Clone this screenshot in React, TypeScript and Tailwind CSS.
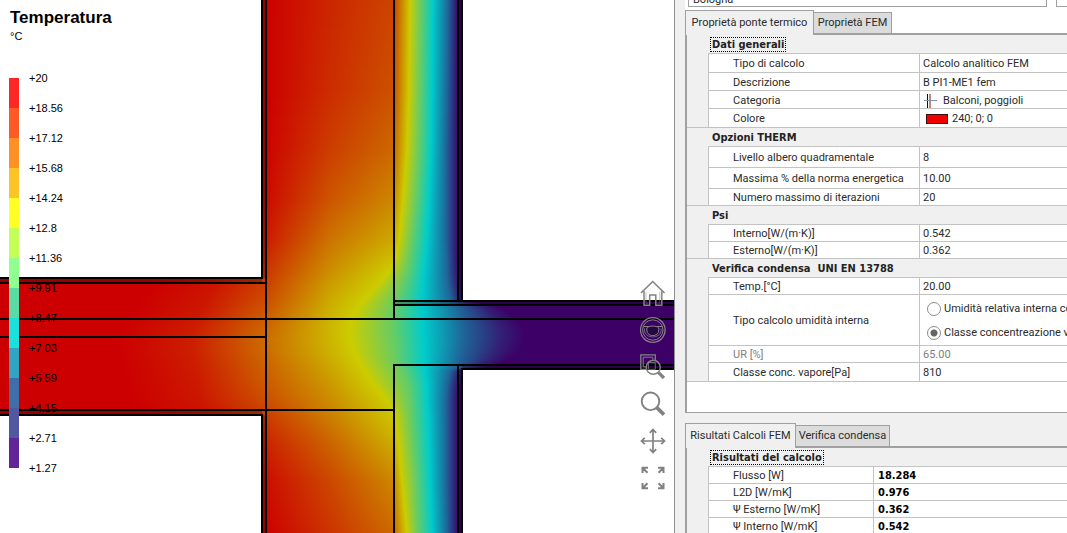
import React from "react";

type Row = { label: string; value: React.ReactNode; height: string; muted?: boolean };
type Group = { title: string; height: string; focused?: boolean; rows: Row[] };

// Each slice: y, then [x, level] nodes. Levels: 0 red, 3 yellow, 5 cyan, 7 violet.
type Slice = { y: number; nodes: [number, number][] };

const slice = (
  y: number,
  start: number,
  left: number,
  middle: number,
  edge: [number, number],
  iso: number[]
): Slice => {
  const tail = iso[4] - iso[3];
  return {
    y,
    nodes: [
      [start - 25, 0],
      [start + (266 - start) * 0.4, left * 0.28],
      [266, left],
      [330, middle],
      edge,
      [iso[0], 3],
      [iso[1], 4],
      [iso[2], 5],
      [iso[3], 6],
      [iso[4] - tail * 0.2, 6.7],
      [iso[4] + tail * 0.3, 7],
    ],
  };
};

const slices: Slice[] = [
  slice(0, 200, 0, 0.55, [394, 1], [410, 421, 433, 448, 457]),
  slice(90, 200, 0, 0.65, [394, 1.2], [409, 420, 432, 447, 457]),
  slice(150, 200, 0.05, 0.9, [394, 1.55], [407, 419, 431, 446, 457]),
  slice(200, 200, 0.15, 1.25, [394, 2], [403, 416, 429, 446, 457]),
  slice(240, 200, 0.4, 1.7, [394, 2.5], [399, 412, 427, 446, 457]),
  slice(260, 190, 0.65, 1.95, [394, 2.85], [395, 409, 425, 447, 457]),
  slice(272, 182, 0.8, 2.1, [389, 3], [389, 407, 424, 447, 458]),
  slice(285, 175, 0.95, 2.3, [378, 3], [378, 403, 423, 448, 459]),
  slice(301, 165, 1.15, 2.5, [363, 3], [363, 397, 422, 451, 462]),
  slice(305, 163, 1.2, 2.55, [360, 3], [360, 396, 422, 456, 486]),
  slice(311, 158, 1.3, 2.6, [356, 3], [356, 394, 422, 459, 496]),
  slice(320, 152, 1.4, 2.65, [352, 3], [352, 393, 423, 461, 505]),
  slice(330, 146, 1.52, 2.68, [350, 3], [350, 393, 423, 463, 511]),
  slice(340, 143, 1.6, 2.66, [351, 3], [351, 395, 424, 463, 511]),
  slice(352, 143, 1.58, 2.6, [354, 3], [354, 396, 424, 461, 506]),
  slice(360, 145, 1.5, 2.52, [358, 3], [358, 397, 424, 459, 497]),
  slice(367, 148, 1.45, 2.42, [362, 3], [362, 400, 425, 455, 482]),
  slice(371, 150, 1.42, 2.38, [365, 3], [365, 403, 425, 450, 461]),
  slice(385, 152, 1.3, 2.22, [374, 3], [374, 408, 427, 447, 458]),
  slice(400, 155, 1.15, 2.05, [387, 3], [387, 410, 427, 446, 457]),
  slice(415, 165, 0.9, 1.88, [394, 2.93], [395, 411, 428, 446, 457]),
  slice(440, 200, 0.55, 1.5, [394, 2.6], [398, 413, 429, 446, 457]),
  slice(480, 200, 0.2, 1.05, [394, 2], [402, 416, 430, 446, 457]),
  slice(534, 200, 0.02, 0.75, [394, 1.55], [407, 418, 432, 447, 457]),
];

const levelColor = (t: number) => {
  const mix = (a: number[], b: number[], k: number) =>
    `rgb(${a.map((v, i) => Math.round(v + (b[i] - v) * k)).join(",")})`;
  if (t <= 3) return mix([204, 0, 0], [204, 204, 0], t / 3);
  if (t <= 5) return mix([204, 204, 0], [0, 204, 204], (t - 3) / 2);
  return mix([0, 204, 204], [60, 0, 102], (t - 5) / 2);
};

const nodesAt = (y: number): [number, number][] => {
  const i = Math.max(1, slices.findIndex((s) => s.y >= y));
  const a = slices[i - 1];
  const b = slices[i];
  const k = (y - a.y) / (b.y - a.y);
  return a.nodes.map(([x, t], n) => [
    x + (b.nodes[n][0] - x) * k,
    t + (b.nodes[n][1] - t) * k,
  ]);
};

const strips = Array.from({ length: 533 }, (_, y) => ({ y, nodes: nodesAt(y + 0.5) }));

const ThermalField = () => (
  <svg
    viewBox="0 0 674 533"
    preserveAspectRatio="xMaxYMin slice"
    className="block h-full w-full"
    role="img"
    aria-label="Temperatura"
  >
    <defs>
      <clipPath id="section">
        <path d="M0 278H262V0H462V301H674V369H462V533H262V415H0Z" />
      </clipPath>
      {strips.map((s) => (
        <linearGradient
          key={s.y}
          id={`strip-${s.y}`}
          gradientUnits="userSpaceOnUse"
          x1="0"
          y1="0"
          x2="674"
          y2="0"
        >
          {s.nodes.map(([x, t], n) => (
            <stop key={n} offset={x / 674} stopColor={levelColor(t)} />
          ))}
        </linearGradient>
      ))}
    </defs>
    <g clipPath="url(#section)" shapeRendering="crispEdges">
      {strips.map((s) => (
        <rect key={s.y} x="0" y={s.y} width="674" height="1" fill={`url(#strip-${s.y})`} />
      ))}
      <g fill="#000" fillOpacity="0.25">
        <path d="M263 0h2v278h-2zM263 415h2v118h-2z" />
        <path d="M459 0h2v301h-2zM459 369h2v164h-2z" />
        <path d="M0 279h262v3H0zM0 411h262v3H0z" />
        <path d="M394 302h280v2H394zM462 366h212v2H462z" />
      </g>
    </g>
    <g fill="none" stroke="#000" strokeWidth="2" shapeRendering="crispEdges">
      <path d="M0 278H262V0M0 415H262V533" />
      <path d="M0 283H266M0 319H674M0 337H266M0 410H394" />
      <path d="M266 0V533M394 0V319M394 533V365H674" />
      <path d="M458 0V301M458 365V533" />
      <path d="M462 0V301M394 301H674M394 305H674M674 369H462V533" />
    </g>
  </svg>
);

const legend = [
  { label: "+20", color: "bg-[#ff2626]" },
  { label: "+18.56", color: "bg-[#ff5a26]" },
  { label: "+17.12", color: "bg-[#ff9026]" },
  { label: "+15.68", color: "bg-[#fcc426]" },
  { label: "+14.24", color: "bg-[#ffff26]" },
  { label: "+12.8", color: "bg-[#c4ff58]" },
  { label: "+11.36", color: "bg-[#90ff90]" },
  { label: "+9.91", color: "bg-[#58dca4]" },
  { label: "+8.47", color: "bg-[#1ce0dc]" },
  { label: "+7.03", color: "bg-[#30a4c0]" },
  { label: "+5.59", color: "bg-[#406ea8]" },
  { label: "+4.15", color: "bg-[#5058a0]" },
  { label: "+2.71", color: "bg-[#622496]" },
];

const Legend = () => (
  <div className="absolute left-[9px] top-2 font-['Liberation_Sans',sans-serif] text-[11px] leading-4 text-black">
    <h1 className="pl-px text-[17px] font-bold leading-5">Temperatura</h1>
    <p className="pl-px">°C</p>
    <ul className="mt-[34px]">
      {legend.map((step) => (
        <li key={step.label} className="flex h-[30px] gap-[10px]">
          <span className={`w-[10px] ${step.color}`} />
          <span className="-mt-2">{step.label}</span>
        </li>
      ))}
      <li className="flex h-[30px] gap-[10px]">
        <span className="w-[10px]" />
        <span className="-mt-2">+1.27</span>
      </li>
    </ul>
  </div>
);

const tools = [
  {
    name: "Home",
    art: (
      <>
        <path d="M1 13 12.7 1.5 24.5 13" strokeWidth="1.6" />
        <path d="M4 11V25.2H9.7V15H15.8V25.2H21.8V11" strokeWidth="1.5" />
        <path d="M6 12V23.2H8M19.8 12V23.2H17.8" strokeWidth="0.5" />
      </>
    ),
  },
  {
    name: "Orbita",
    art: (
      <>
        <circle cx="12.8" cy="13" r="12.3" strokeWidth="1.3" />
        <circle cx="12.8" cy="13" r="10.2" strokeWidth="1" />
        <path d="M3.5 9.5H22.1" />
        <path d="M6.8 11C9 8.4 16.6 8.4 18.8 11V13C18.8 20.5 6.8 20.5 6.8 13Z" fill="#25083f" />
        <path d="M4.5 11.5V13.5C5 22 20.6 22 21.1 13.5V11.5" strokeWidth="0.8" />
      </>
    ),
  },
  {
    name: "Zoom finestra",
    art: (
      <>
        <path d="M7 15.3H.8V.8H15.3V6" strokeWidth="1.3" />
        <path d="M7 12.8H3.2V3.2H12.8V5.5" />
        <path d="M8.5 8.5H15.3V15.3H8.5Z" strokeWidth="0.8" />
        <circle cx="13.3" cy="13.3" r="7" strokeWidth="1.5" />
        <path d="M18.3 18.3 24 24" strokeWidth="3.2" />
      </>
    ),
  },
  {
    name: "Zoom",
    art: (
      <>
        <circle cx="10.5" cy="10.3" r="8.8" strokeWidth="1.9" />
        <path d="M16.8 16.6 24 23.6" strokeWidth="3.6" />
      </>
    ),
  },
  {
    name: "Sposta",
    art: (
      <path
        d="M13 1.5V24.5M1.500 13H24.5M9.8 4.8 13 1.5 16.2 4.8M9.8 21.2 13 24.5 16.2 21.2M4.8 9.8 1.5 13 4.8 16.2M21.2 9.8 24.5 13 21.2 16.2"
        strokeWidth="1.7"
      />
    ),
  },
  {
    name: "Adatta alla vista",
    art: (
      <path
        d="M2.500 8V2.700H8M2.700 3 7.500 7.800M18 2.700H23.500V8M23.300 3 18.500 7.800M2.500 18V23.300H8M2.700 23 7.500 18.200M18 23.300H23.500V18M23.300 23 18.500 18.200"
        strokeWidth="2"
      />
    ),
  },
];

const ViewTools = () => (
  <div className="absolute right-2 top-[280px] flex flex-col gap-[11px]">
    {tools.map((tool) => (
      <button key={tool.name} type="button" aria-label={tool.name} className="h-[26px] w-[26px]">
        <svg viewBox="0 0 26 26" className="h-full w-full" fill="none" stroke="#828282" strokeWidth="1">
          {tool.art}
        </svg>
      </button>
    ))}
  </div>
);

const Humidity = () => (
  <div className="flex flex-col gap-[6px] pl-1">
    {["Umidità relativa interna co", "Classe concentreazione va"].map((text, i) => (
      <label key={text} className="flex h-[18px] items-center gap-[3px]">
        <input
          type="radio"
          name="umidita"
          defaultChecked={i === 1}
          className="h-[14px] w-[14px] shrink-0 appearance-none rounded-full border border-[#8c8c8c] bg-white checked:bg-[radial-gradient(circle,#666_3px,#fff_4px)]"
        />
        {text}
      </label>
    ))}
  </div>
);

const properties: Group[] = [
  {
    title: "Dati generali",
    height: "h-[18px]",
    focused: true,
    rows: [
      { label: "Tipo di calcolo", value: "Calcolo analitico FEM", height: "h-[19px]" },
      { label: "Descrizione", value: "B PI1-ME1 fem", height: "h-[18px]" },
      {
        label: "Categoria",
        height: "h-[18px]",
        value: (
          <span className="flex h-[14px] items-center gap-[5px]">
            <svg viewBox="0 0 15 14" className="h-[14px] w-[15px]" shapeRendering="crispEdges">
              <path d="M6 0h2v14H6z" fill="#c08878" />
              <path d="M4 0h1v14H4z" fill="#111" />
              <path d="M1 6h13v1H1z" fill="#7f93ad" />
            </svg>
            Balconi, poggioli
          </span>
        ),
      },
      {
        label: "Colore",
        height: "h-[19px]",
        value: (
          <span className="flex items-center gap-1 pl-[3px]">
            <span className="h-[10px] w-[22px] border border-[#401010] bg-[#f00000]" />
            240; 0; 0
          </span>
        ),
      },
    ],
  },
  {
    title: "Opzioni THERM",
    height: "h-[19px]",
    rows: [
      { label: "Livello albero quadramentale", value: "8", height: "h-[21px]" },
      { label: "Massima % della norma energetica", value: "10.00", height: "h-[21px]" },
      { label: "Numero massimo di iterazioni", value: "20", height: "h-[17px]" },
    ],
  },
  {
    title: "Psi",
    height: "h-[19px]",
    rows: [
      { label: "Interno[W/(m·K)]", value: "0.542", height: "h-[17px]" },
      { label: "Esterno[W/(m·K)]", value: "0.362", height: "h-[17px]" },
    ],
  },
  {
    title: "Verifica condensa  UNI EN 13788",
    height: "h-[19px]",
    rows: [
      { label: "Temp.[°C]", value: "20.00", height: "h-[17px]" },
      { label: "Tipo calcolo umidità interna", value: <Humidity />, height: "h-[51px]" },
      { label: "UR [%]", value: "65.00", height: "h-[17px]", muted: true },
      { label: "Classe conc. vapore[Pa]", value: "810", height: "h-[19px]" },
    ],
  },
];

const results: Group[] = [
  {
    title: "Risultati del calcolo",
    height: "h-[18px]",
    focused: true,
    rows: [
      { label: "Flusso [W]", value: "18.284", height: "h-[17px]" },
      { label: "L2D [W/mK]", value: "0.976", height: "h-[17px]" },
      { label: "Ψ Esterno [W/mK]", value: "0.362", height: "h-[17px]" },
      { label: "Ψ Interno [W/mK]", value: "0.542", height: "h-[17px]" },
    ],
  },
];

const PropertyTable = ({
  groups,
  labelWidth,
  valueClass,
}: {
  groups: Group[];
  labelWidth: string;
  valueClass: string;
}) => (
  <table className="w-full table-fixed border-separate border-spacing-0 border-b border-[#c3c3c3] text-left leading-[14px]">
    <colgroup>
      <col className="w-[21px]" />
      <col className={labelWidth} />
      <col />
    </colgroup>
    {groups.map((group, g) => (
      <tbody key={group.title}>
        <tr className={`bg-[#f0f0f0] ${group.height}`}>
          <td className={g > 0 ? "border-t border-[#c3c3c3] p-0" : "p-0"} />
          <th
            colSpan={2}
            className={`whitespace-pre p-0 pl-[3px] pt-0.5 font-['DejaVu_Sans_Condensed','DejaVu_Sans',sans-serif] font-bold text-[#222] ${
              g > 0 ? "border-t border-[#c3c3c3]" : ""
            }`}
          >
            <span className={group.focused ? "px-px outline-1 outline-dotted outline-black" : "px-px"}>
              {group.title}
            </span>
          </th>
        </tr>
        {group.rows.map((row) => (
          <tr key={row.label} className={`${row.height} ${row.muted ? "text-[#808080]" : ""}`}>
            <td className="bg-[#f0f0f0] p-0" />
            <th className="whitespace-nowrap border-l border-t border-[#c3c3c3] bg-white p-0 pl-6 pt-0.5 font-normal">
              {row.label}
            </th>
            <td
              className={`whitespace-nowrap border-l border-t border-[#c3c3c3] bg-white p-0 pt-0.5 ${valueClass}`}
            >
              {row.value}
            </td>
          </tr>
        ))}
      </tbody>
    ))}
  </table>
);

const Tabs = ({ active, other, widths }: { active: string; other: string; widths: [string, string] }) => (
  <div role="tablist" className="flex h-[25px] items-end border-b-2 border-[#a0a0a0]">
    <button
      type="button"
      role="tab"
      aria-selected="true"
      className={`-mb-0.5 h-[25px] border border-b-0 border-[#a0a0a0] bg-[#f0f0f0] ${widths[0]}`}
    >
      {active}
    </button>
    <button
      type="button"
      role="tab"
      aria-selected="false"
      className={`h-[21px] border border-b-0 border-l-0 border-[#a0a0a0] bg-[#dcdcdc] ${widths[1]}`}
    >
      {other}
    </button>
  </div>
);

const App = () => {
  return (
    <div className="flex h-screen overflow-hidden bg-white font-[Roboto,sans-serif] text-[11px] text-[#2b2b2b]">
      <main className="relative min-w-0 flex-1 overflow-hidden">
        <ThermalField />
        <Legend />
        <ViewTools />
      </main>

      <aside className="flex w-[393px] shrink-0 flex-col overflow-hidden border-l border-[#909090] bg-[#f0f0f0] pl-[10px]">
        <div className="flex flex-col bg-white">
          <div className="-mt-[11px] mb-[3px] flex h-[18px] shrink-0 gap-[9px] pl-[3px]">
            <input
              aria-label="Località"
              defaultValue="Bologna"
              className="w-[359px] border border-[#a0a0a0] bg-white px-1 pt-1"
            />
            <button type="button" aria-label="Sfoglia" className="flex-1 border border-r-0 border-[#a0a0a0] bg-white" />
          </div>
          <Tabs
            active="Proprietà ponte termico"
            other="Proprietà FEM"
            widths={["w-[129px]", "w-[78px]"]}
          />
        </div>
        <section className="h-[378px] shrink-0 border-b border-l-2 border-[#a0a0a0] bg-white">
          <PropertyTable groups={properties} labelWidth="w-[211px]" valueClass="pl-[3px]" />
        </section>

        <div className="mt-[10px] flex flex-1 flex-col">
          <Tabs
            active="Risultati Calcoli FEM"
            other="Verifica condensa"
            widths={["w-[111px]", "w-[94px]"]}
          />
          <section className="flex-1 border-l-2 border-[#a0a0a0]">
            <PropertyTable
              groups={results}
              labelWidth="w-[165px]"
              valueClass="pl-[4px] font-['DejaVu_Sans_Condensed','DejaVu_Sans',sans-serif] font-bold text-black"
            />
          </section>
        </div>
      </aside>
    </div>
  );
};

export default App;
